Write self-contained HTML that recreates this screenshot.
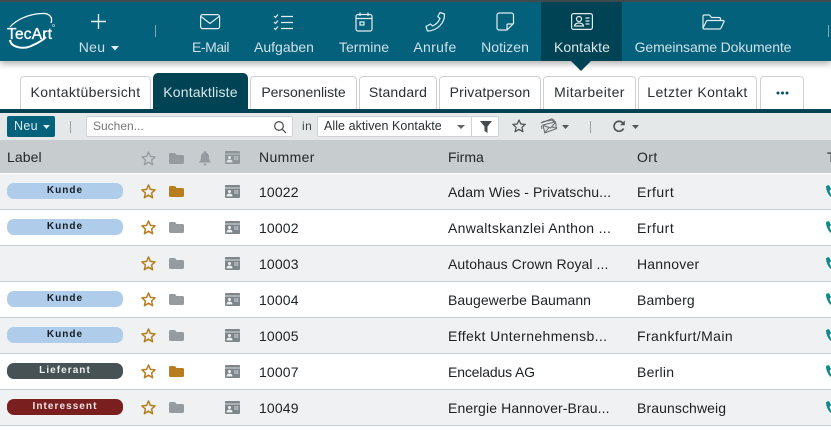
<!DOCTYPE html>
<html lang="de"><head><meta charset="utf-8"><title>Kontakte</title>
<style>
html,body{margin:0;padding:0}
body{width:831px;height:430px;overflow:hidden;background:#fff;position:relative;font-family:"Liberation Sans",sans-serif;color:#2b2f31}
.a{position:absolute;white-space:nowrap}
.nav{position:absolute;left:0;top:0;width:831px;height:61px;background:#03617c;border-top:2px solid #3f4a4e;box-sizing:border-box;box-shadow:0 3px 6px rgba(0,0,0,.3)}
.nt{position:absolute;top:38px;height:18px;line-height:18px;font-size:14px;color:#cfe0e6;text-align:center;white-space:nowrap;transform:translateX(-50%)}
.tab{position:absolute;top:76px;height:33px;box-sizing:border-box;border:1px solid #cdd1d3;border-bottom:0;border-radius:4px 4px 0 0;background:#fff;text-align:center;line-height:30px;font-size:14px;color:#2b2f31}
.tab.on{top:73px;height:36px;background:#004354;border-color:#004354;color:#d8e6ea;line-height:36px;border-radius:5px 5px 0 0}
.row{position:absolute;left:0;width:831px;height:36px;box-sizing:border-box;border-bottom:1px solid #c9cdd0}
.row.g{background:#eff1f3}
.row.w{background:#fff}
.t{position:absolute;top:8.500px;line-height:18px;font-size:14px;letter-spacing:.15px;color:#1d2124;white-space:nowrap}
.pill{position:absolute;left:7px;top:9px;width:116px;height:16px;border-radius:7px;text-align:center;line-height:15px;font-size:10px;font-weight:bold;letter-spacing:1.05px}
.k{background:#afcdea;color:#141c24}
.l{background:#475254;color:#eef1f1}
.i{background:#7a1f20;color:#f2e4e4}
svg{position:absolute;overflow:visible}
.h{position:absolute;top:148px;line-height:18px;font-size:14px;color:#23272a}
</style></head><body>

<div class="nav"></div>
<div class="a" style="left:541px;top:2px;width:81px;height:59px;background:#004354"></div>
<svg style="left:571px;top:61px" width="20" height="10"><path d="M0 0H20L10 10Z" fill="#004354"/></svg>

<!-- logo -->
<svg style="left:6px;top:12px" width="52" height="38" fill="none" stroke="#fff">
<path d="M4 15C10 8 22 2 36 1.500C44 1 47 6 45 11" stroke-width="1.300"/>
<path d="M4 28C5 36 18 37 24 34.500C30 32 36 29 40 25" stroke-width="2"/>
<text x="1" y="27" font-family="Liberation Sans" font-size="15.500" fill="#fff" stroke="#fff" stroke-width=".35" textLength="45">TecArt</text>
<circle cx="47.500" cy="13.500" r="1.200" stroke-width=".5"/>
</svg>

<!-- nav icons -->
<svg style="left:90px;top:13px" width="18" height="18" stroke="#e3edf0" stroke-width="1.400" fill="none"><path d="M8.500 1V16M1 8.500H16"/></svg>
<div class="nt" style="left:92px;letter-spacing:.3px">Neu</div>
<svg style="left:111px;top:46px" width="8" height="5"><path d="M0 0H8L4 4.500Z" fill="#e3edf0"/></svg>
<div class="a" style="left:155px;top:25px;width:1px;height:12px;background:#7fa9b7"></div>

<svg style="left:200px;top:14px" width="21" height="16" stroke="#e3edf0" stroke-width="1.200" fill="none"><rect x=".6" y=".6" width="19" height="14" rx="2"/><path d="M1 2.500L10 9.500L19 2.500"/></svg>
<div class="nt" style="left:210.500px;letter-spacing:-.45px">E-Mail</div>
<svg style="left:273px;top:13px" width="22" height="18" stroke="#e3edf0" stroke-width="1.200" fill="none"><path d="M1 3L2.500 4.500L5 1.500M1 9L2.500 10.500L5 7.500M1 15L2.500 16.500L5 13.500M8 3.500H20M8 9.500H20M8 15.500H20"/></svg>
<div class="nt" style="left:284px;letter-spacing:0">Aufgaben</div>
<svg style="left:355px;top:12px" width="19" height="20" stroke="#e3edf0" stroke-width="1.200" fill="none"><rect x="1" y="2.500" width="16" height="16.500" rx="2"/><path d="M1 6.500H17M5 .5V4M13 .5V4"/><rect x="5" y="10" width="4" height="3"/></svg>
<div class="nt" style="left:364px;letter-spacing:.05px">Termine</div>
<svg style="left:425px;top:11px" width="21" height="21" stroke="#e3edf0" stroke-width="1.200" fill="none"><path d="M15 1.500L19.500 3C20 12 12 20 2.500 20L1 15.500L5.500 13L7.500 15C11 13.500 13.500 11 15 7.500L12.800 5.500Z" stroke-linejoin="round"/></svg>
<div class="nt" style="left:435px;letter-spacing:.35px">Anrufe</div>
<svg style="left:496px;top:12px" width="19" height="19" stroke="#e3edf0" stroke-width="1.200" fill="none"><path d="M3 1H15.500C16.500 1 17.500 2 17.500 3V11.500L11 18H3C2 18 1 17 1 16V3C1 2 2 1 3 1Z"/><path d="M17 12H12C11.300 12 11 12.500 11 13V17.500"/></svg>
<div class="nt" style="left:505px;letter-spacing:.05px">Notizen</div>
<svg style="left:571px;top:13px" width="22" height="17" stroke="#e3edf0" stroke-width="1.200" fill="none"><rect x=".6" y=".6" width="20.800" height="15.800" rx="2"/><circle cx="8" cy="6" r="2.500"/><path d="M3.500 13C4 10.500 6 10 8 10S12 10.500 12.500 13H3.500ZM14.500 5H18.500M14.500 8H18.500M14.500 11H18.500"/></svg>
<div class="nt" style="left:582px;color:#dbe8ec;letter-spacing:.1px">Kontakte</div>
<svg style="left:702px;top:14px" width="23" height="16" stroke="#e3edf0" stroke-width="1.200" fill="none"><path d="M1 14V2.500C1 1.500 1.500 1 2.500 1H7.500L9.500 3.500H17C18 3.500 18.500 4 18.500 5V6.500M1 14L4.500 7C4.800 6.500 5 6.500 5.500 6.500H21C22 6.500 22.300 7 22 7.800L19 14C18.700 14.600 18.500 15 17.500 15H2C1.500 15 1 14.500 1 14Z"/></svg>
<div class="nt" style="left:713px;letter-spacing:-.1px">Gemeinsame Dokumente</div>
<div class="a" style="left:828px;top:25px;width:1px;height:12px;background:#7fa9b7"></div>

<!-- tabs -->
<div class="tab" style="left:20px;width:131px;letter-spacing:.35px">Kontaktübersicht</div>
<div class="tab on" style="left:153px;width:95px;letter-spacing:.17px">Kontaktliste</div>
<div class="tab" style="left:250px;width:107px;letter-spacing:-.04px">Personenliste</div>
<div class="tab" style="left:359px;width:78px;letter-spacing:.17px">Standard</div>
<div class="tab" style="left:439px;width:102px;letter-spacing:.17px">Privatperson</div>
<div class="tab" style="left:543px;width:93px;letter-spacing:.42px">Mitarbeiter</div>
<div class="tab" style="left:638px;width:119px;letter-spacing:.42px">Letzter Kontakt</div>
<div class="tab" style="left:760px;width:44px"><svg style="left:15px;top:14px" width="13" height="4" fill="#03506a"><circle cx="2" cy="2" r="1.500"/><circle cx="6.500" cy="2" r="1.500"/><circle cx="11" cy="2" r="1.500"/></svg></div>
<div class="a" style="left:0;top:109px;width:831px;height:4px;background:#004354"></div>

<!-- toolbar -->
<div class="a" style="left:0;top:113px;width:831px;height:27px;background:#e4e8e9"></div>
<div class="a" style="left:7px;top:116px;width:48px;height:21px;border-radius:2px;background:#03617c"></div>
<div class="a" style="left:14px;top:118px;line-height:17px;font-size:12.500px;letter-spacing:.3px;color:#dfeaee">Neu</div>
<svg style="left:43px;top:125px" width="7" height="4"><path d="M0 0H7L3.500 4Z" fill="#dfeaee"/></svg>
<div class="a" style="left:70px;top:121px;width:1px;height:12px;background:#9ca3a6"></div>
<div class="a" style="left:86px;top:116px;width:207px;height:21px;box-sizing:border-box;background:#fff;border:1px solid #cfd3d5;border-radius:2px"></div>
<div class="a" style="left:93px;top:118px;line-height:17px;font-size:12px;color:#777">Suchen...</div>
<svg style="left:273px;top:120px" width="14" height="14" stroke="#555" stroke-width="1.300" fill="none"><circle cx="6" cy="6" r="4.300"/><path d="M9.200 9.200L13 13"/></svg>
<div class="a" style="left:302px;top:118px;line-height:17px;font-size:12px;letter-spacing:.4px;color:#444">in</div>
<div class="a" style="left:317px;top:116px;width:182px;height:21px;box-sizing:border-box;background:#fff;border:1px solid #cfd3d5;border-radius:2px"></div>
<div class="a" style="left:471px;top:116px;width:1px;height:21px;background:#cfd3d5"></div>
<div class="a" style="left:324px;top:118px;line-height:17px;font-size:12.500px;letter-spacing:.05px;color:#2b2f31">Alle aktiven Kontakte</div>
<svg style="left:457px;top:125px" width="8" height="4"><path d="M0 0H8L4 4Z" fill="#666"/></svg>
<svg style="left:480px;top:121px" width="12" height="12"><path d="M0 0H12L7.500 5.500V12L4.500 10V5.500Z" fill="#444c4f"/></svg>
<svg style="left:512px;top:119px" width="14" height="14" stroke="#4a4f52" stroke-width="1.200" fill="none"><path d="M7 1L8.800 5L13.200 5.400L9.900 8.300L10.900 12.700L7 10.400L3.100 12.700L4.100 8.300L.8 5.400L5.200 5Z" stroke-linejoin="round"/></svg>
<svg style="left:540px;top:118px" width="17" height="17" stroke="#63696c" stroke-width="1" fill="none"><path d="M.8 5L12 .8L13.500 4"/><path d="M1.500 7.500L2 11M2.500 3.800L13.800 1.800L14.500 4"/><path d="M3 7L15.500 3.800L16.500 10.500L4.800 15Z"/><path d="M3.500 7.500L10.500 10L15.500 4.500M5 14.500L9 9.500M12 9L16 10"/></svg>
<svg style="left:562px;top:125px" width="7" height="4"><path d="M0 0H7L3.500 4Z" fill="#555"/></svg>
<div class="a" style="left:590px;top:121px;width:1px;height:12px;background:#9ca3a6"></div>
<svg style="left:612px;top:120px" width="13" height="13" stroke="#555" stroke-width="1.700" fill="none"><path d="M11 3.200A5 5 0 1 0 11.500 8.500"/><path d="M8 5.200H12.800V.5Z" stroke="none" fill="#555"/></svg>
<svg style="left:632px;top:125px" width="7" height="4"><path d="M0 0H7L3.500 4Z" fill="#555"/></svg>

<!-- header -->
<div class="a" style="left:0;top:140px;width:831px;height:33px;background:#c7cccf"></div>
<div class="h" style="left:7px;letter-spacing:.1px">Label</div>
<div class="h" style="left:259px;letter-spacing:.35px">Nummer</div>
<div class="h" style="left:448px;letter-spacing:0">Firma</div>
<div class="h" style="left:637px;letter-spacing:.4px">Ort</div>
<div class="h" style="left:827px">T</div>
<svg style="left:141px;top:151px" width="15" height="15" stroke="#959b9e" stroke-width="1.300" fill="none"><path d="M7.500 1L9.400 5.400L14 5.900L10.600 9L11.600 13.700L7.500 11.200L3.400 13.700L4.400 9L1 5.900L5.600 5.400Z" stroke-linejoin="round"/></svg>
<svg style="left:169px;top:153px" width="15" height="11"><path d="M0 1.500C0 .5.500 0 1.500 0H6L7.500 2H13.500C14.500 2 15 2.500 15 3.500V9.500C15 10.500 14.500 11 13.500 11H1.500C.5 11 0 10.500 0 9.500Z" fill="#959b9e"/></svg>
<svg style="left:199px;top:151px" width="12" height="15"><path d="M6 0C7 0 7 1 7 1.500C9 2 10 4 10 6C10 9 11 10 12 11.500H0C1 10 2 9 2 6C2 4 3 2 5 1.500C5 1 5 0 6 0ZM4.500 12.500H7.500C7.500 14 6.500 14.500 6 14.500S4.500 14 4.500 12.500Z" fill="#959b9e"/></svg>
<svg style="left:225px;top:151px" width="15" height="13"><rect width="15" height="13" rx="1" fill="#8f9699"/><path d="M0 3H15" stroke="#c7cccf" stroke-width=".8"/><circle cx="4.500" cy="6.500" r="1.500" fill="#dfe3e5"/><path d="M2 11C2 9.300 3.300 9 4.500 9S7 9.300 7 11ZM9 6H13.500M9 8H13.500" fill="#dfe3e5" stroke="#dfe3e5" stroke-width=".8"/></svg>

<!-- rows -->
<div class="row g" style="top:174px"><div class="pill k">Kunde</div><div class="t" style="left:259px">10022</div><div class="t" style="left:448px;letter-spacing:.08px">Adam Wies - Privatschu...</div><div class="t" style="left:637px;letter-spacing:.5px">Erfurt</div></div>
<div class="row w" style="top:210px"><div class="pill k">Kunde</div><div class="t" style="left:259px">10002</div><div class="t" style="left:448px;letter-spacing:.3px">Anwaltskanzlei Anthon ...</div><div class="t" style="left:637px;letter-spacing:.5px">Erfurt</div></div>
<div class="row g" style="top:246px"><div class="t" style="left:259px">10003</div><div class="t" style="left:448px;letter-spacing:.07px">Autohaus Crown Royal ...</div><div class="t" style="left:637px;letter-spacing:.2px">Hannover</div></div>
<div class="row w" style="top:282px"><div class="pill k">Kunde</div><div class="t" style="left:259px">10004</div><div class="t" style="left:448px;letter-spacing:.03px">Baugewerbe Baumann</div><div class="t" style="left:637px;letter-spacing:.15px">Bamberg</div></div>
<div class="row g" style="top:318px"><div class="pill k">Kunde</div><div class="t" style="left:259px">10005</div><div class="t" style="left:448px;letter-spacing:.38px">Effekt Unternehmensb...</div><div class="t" style="left:637px;letter-spacing:.42px">Frankfurt/Main</div></div>
<div class="row w" style="top:354px"><div class="pill l">Lieferant</div><div class="t" style="left:259px">10007</div><div class="t" style="left:448px;letter-spacing:-.15px">Enceladus AG</div><div class="t" style="left:637px;letter-spacing:.25px">Berlin</div></div>
<div class="row g" style="top:390px"><div class="pill i">Interessent</div><div class="t" style="left:259px">10049</div><div class="t" style="left:448px;letter-spacing:.12px">Energie Hannover-Brau...</div><div class="t" style="left:637px;letter-spacing:.1px">Braunschweig</div></div>

<svg style="left:0;top:0" width="831" height="430">
<defs>
<path id="s" d="M7.500 1L9.400 5.400L14 5.900L10.600 9L11.600 13.700L7.500 11.200L3.400 13.700L4.400 9L1 5.900L5.600 5.400Z" stroke="#b87d1f" stroke-width="1.500" fill="none" stroke-linejoin="round"/>
<path id="f" d="M0 1.500C0 .5.500 0 1.500 0H6L7.500 2H13.500C14.500 2 15 2.500 15 3.500V9.500C15 10.500 14.500 11 13.500 11H1.500C.5 11 0 10.500 0 9.500Z"/>
<g id="c"><rect width="15" height="13" rx="1" fill="#7d878b"/><path d="M0 3H15" stroke="#eef0f2" stroke-width=".8"/><circle cx="4.500" cy="6.500" r="1.500" fill="#eef0f2"/><path d="M2 11C2 9.300 3.300 9 4.500 9S7 9.300 7 11ZM9 6H13.500M9 8H13.500" fill="#eef0f2" stroke="#eef0f2" stroke-width=".8"/></g>
<path id="p" d="M0 1L3 0L5 4L3.500 6L5 9.500V12C2 10 0 5 0 1Z" fill="#0f8a8c"/>
</defs>
<use href="#s" x="141" y="184"/><use href="#f" x="169" y="186" fill="#b87d1f"/><use href="#c" x="225" y="185"/><use href="#p" x="826" y="185"/>
<use href="#s" x="141" y="220"/><use href="#f" x="169" y="222" fill="#959b9e"/><use href="#c" x="225" y="221"/><use href="#p" x="826" y="221"/>
<use href="#s" x="141" y="256"/><use href="#f" x="169" y="258" fill="#959b9e"/><use href="#c" x="225" y="257"/><use href="#p" x="826" y="257"/>
<use href="#s" x="141" y="292"/><use href="#f" x="169" y="294" fill="#959b9e"/><use href="#c" x="225" y="293"/><use href="#p" x="826" y="293"/>
<use href="#s" x="141" y="328"/><use href="#f" x="169" y="330" fill="#959b9e"/><use href="#c" x="225" y="329"/><use href="#p" x="826" y="329"/>
<use href="#s" x="141" y="364"/><use href="#f" x="169" y="366" fill="#b87d1f"/><use href="#c" x="225" y="365"/><use href="#p" x="826" y="365"/>
<use href="#s" x="141" y="400"/><use href="#f" x="169" y="402" fill="#959b9e"/><use href="#c" x="225" y="401"/><use href="#p" x="826" y="401"/>
</svg>
</body></html>
